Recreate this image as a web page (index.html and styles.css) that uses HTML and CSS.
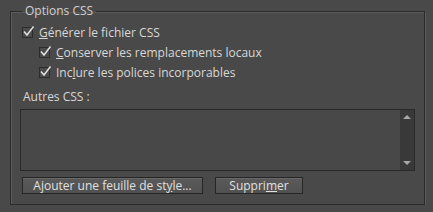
FILE: index.html
```html
<!DOCTYPE html>
<html lang="fr">
<head>
    <title>Options CSS</title>
    <link rel="stylesheet" href="styles.css">
</head>
<body>
<fieldset class="group">
    <legend class="group_title">Options CSS</legend>

    <label class="check_row">
        <span class="check_box"><svg width="13" height="13" viewBox="0 0 13 13"><path d="M2 6.5 L5 10 L11.5 1.5" fill="none" stroke="#e2e2e2" stroke-width="1.5"/></svg></span>
        <span><u>G</u>énérer le fichier CSS</span>
    </label>
    <div class="sub_options">
        <label class="check_row">
            <span class="check_box"><svg width="13" height="13" viewBox="0 0 13 13"><path d="M2 6.5 L5 10 L11.5 1.5" fill="none" stroke="#e2e2e2" stroke-width="1.5"/></svg></span>
            <span><u>C</u>onserver les remplacements locaux</span>
        </label>
        <label class="check_row">
            <span class="check_box"><svg width="13" height="13" viewBox="0 0 13 13"><path d="M2 6.5 L5 10 L11.5 1.5" fill="none" stroke="#e2e2e2" stroke-width="1.5"/></svg></span>
            <span>Inc<u>l</u>ure les polices incorporables</span>
        </label>
    </div>

    <div class="field_label">Autres CSS :</div>
    <div class="list_box">
        <div class="list_area"></div>
        <div class="scroll_bar">
            <span class="arrow_up"></span>
            <span class="arrow_down"></span>
        </div>
    </div>

    <div class="button_row">
        <button type="button" class="dlg_button wide">Ajouter une feuille de st<u>y</u>le...</button>
        <button type="button" class="dlg_button">Suppri<u>m</u>er</button>
    </div>
</fieldset>
</body>
</html>
```

FILE: styles.css
```css
* {
    box-sizing: border-box;
}

body {
    margin: 0;
    background-color: #494949;
    color: #d8d8d8;
    font-family: "Open Sans", "Noto Sans", sans-serif;
    font-size: 12px;
}

.group {
    margin: 4px 9px 0 10px;
    height: 201px;
    padding: 0 9px 0 11px;
    border: 1px solid #2a2a2a;
    box-shadow: 1px 1px 0 #5c5c5c, inset 1px 1px 0 #5c5c5c;
}

.group_title {
    padding: 0 3px;
    line-height: 14px;
    color: #d0d0d0;
}

.check_row {
    display: flex;
    align-items: center;
    height: 20px;
    gap: 6px;
}

.group > .check_row {
    margin-top: 4px;
}

.check_box {
    width: 11px;
    height: 11px;
    border: 1px solid #2c2c2c;
    background-color: #4b4b4b;
    position: relative;
}

.check_box svg {
    position: absolute;
    left: -1px;
    top: -3px;
}

.sub_options {
    padding-left: 17px;
}

.field_label {
    margin-top: 7px;
    padding-left: 1px;
    line-height: 16px;
}

.list_box {
    display: flex;
    margin: 4px 0 0 -2px;
    width: 395px;
    height: 62px;
    border: 1px solid #2a2a2a;
    background-color: #484848;
}

.list_area {
    flex: 1;
}

.scroll_bar {
    width: 14px;
    background-color: #393939;
    display: flex;
    flex-direction: column;
    justify-content: space-between;
    align-items: center;
    padding: 5px 0;
}

.arrow_up {
    width: 0;
    height: 0;
    border-left: 4px solid transparent;
    border-right: 4px solid transparent;
    border-bottom: 4px solid #a8a8a8;
}

.arrow_down {
    width: 0;
    height: 0;
    border-left: 4px solid transparent;
    border-right: 4px solid transparent;
    border-top: 4px solid #a8a8a8;
}

.button_row {
    display: flex;
    gap: 12px;
    margin-top: 6px;
}

.dlg_button {
    height: 17px;
    width: 88px;
    padding: 0;
    border: 1px solid #262626;
    background: linear-gradient(#5a5a5a, #515151);
    box-shadow: inset 0 1px 0 #686868;
    color: #e0e0e0;
    font-family: "Open Sans", "Noto Sans", sans-serif;
    font-size: 12px;
    line-height: 14px;
}

.dlg_button.wide {
    width: 181px;
}
```
